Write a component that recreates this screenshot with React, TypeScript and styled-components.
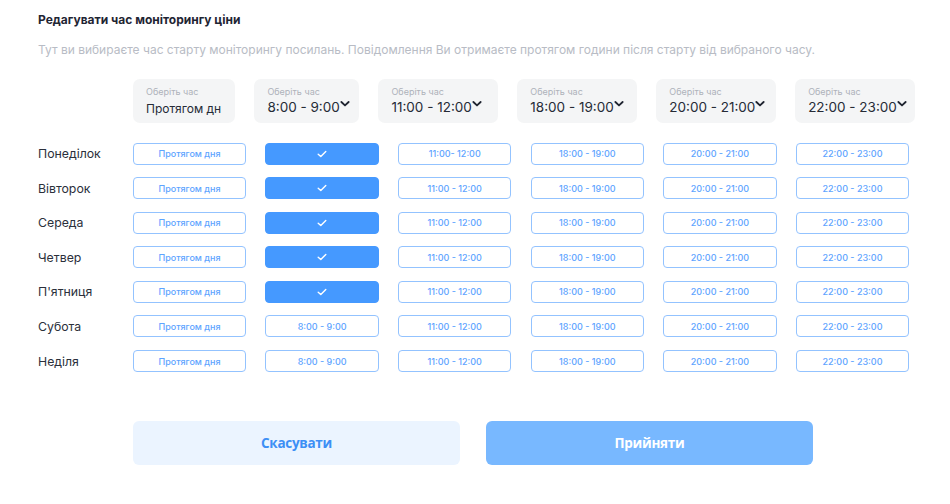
import React from 'react'
import styled, { createGlobalStyle } from 'styled-components'

const GlobalStyle = createGlobalStyle`
  body {
    margin: 0;
    background: #fff;
    font-family: Inter, "Noto Sans", sans-serif;
  }
`

const Page = styled.div`
  width: 950px;
  height: 504px;
  box-sizing: border-box;
  padding: 12px 0 0 38px;
  background: #fff;
`

const Title = styled.h2`
  margin: 0;
  font-size: 12px;
  line-height: 15px;
  font-weight: 700;
  color: #1f2533;
`

const Subtitle = styled.p`
  margin: 15px 0 0;
  font-size: 12px;
  line-height: 16px;
  color: #b8bcc5;
`

const HeaderRow = styled.div`
  display: flex;
  gap: 19.4px;
  margin: 21px 0 0 95px;
`

const SelectBox = styled.div<{ $w: number }>`
  width: ${(p) => p.$w}px;
  height: 44px;
  box-sizing: border-box;
  padding: 7px 0 0 13px;
  border-radius: 7px;
  background: #f4f5f6;
`

const SelectLabel = styled.div`
  font-size: 9px;
  line-height: 11px;
  color: #aeb2ba;
`

const SelectValue = styled.div<{ $small?: boolean }>`
  display: flex;
  align-items: flex-start;
  margin-top: ${(p) => (p.$small ? '3px' : '1px')};
  font-size: ${(p) => (p.$small ? '12px' : '13.5px')};
  line-height: 18px;
  color: #262b36;
  white-space: nowrap;

  & > svg {
    margin-top: 2px;
  }
`

const Grid = styled.div`
  display: grid;
  grid-template-columns: 75.6px repeat(6, 113.3px);
  column-gap: 19.3px;
  row-gap: 12.6px;
  margin-top: 19.5px;
`

const DayLabel = styled.div`
  display: flex;
  align-items: center;
  height: 22px;
  font-size: 12.3px;
  color: #2b303b;
`

const Slot = styled.div<{ $active?: boolean }>`
  display: flex;
  align-items: center;
  justify-content: center;
  height: 22px;
  box-sizing: border-box;
  border-radius: 4px;
  border: 1.5px solid ${(p) => (p.$active ? '#4599ff' : '#93c3ff')};
  background: ${(p) => (p.$active ? '#4599ff' : '#fff')};
  color: #5ea4ff;
  font-size: 9px;
  font-weight: 500;
`

const Footer = styled.div`
  display: flex;
  gap: 26px;
  margin: 49px 0 0 95px;
`

const FooterButton = styled.button<{ $primary?: boolean }>`
  width: 327px;
  height: 44px;
  border: none;
  border-radius: 6px;
  background: ${(p) => (p.$primary ? '#78b8ff' : '#ebf4ff')};
  color: ${(p) => (p.$primary ? '#fff' : '#3d8ff5')};
  font-family: "Open Sans", sans-serif;
  font-size: 13.5px;
  font-weight: 700;
  letter-spacing: -0.3px;
`

const Chevron = () => (
  <svg width="10" height="8" viewBox="0 0 11 8">
    <path d="M1.5 1.8 L5.5 5.6 L9.5 1.8" fill="none" stroke="#1f2430" strokeWidth="2" strokeLinecap="round" strokeLinejoin="round" />
  </svg>
)

const Check = () => (
  <svg width="10" height="8" viewBox="0 0 10 8">
    <path d="M1.2 4.2 L3.8 6.6 L8.8 1.4" fill="none" stroke="#fff" strokeWidth="1.4" strokeLinecap="round" strokeLinejoin="round" />
  </svg>
)

const headers = [
  { value: 'Протягом дн', w: 102, small: true },
  { value: '8:00 - 9:00', w: 104.7 },
  { value: '11:00 - 12:00', w: 119.5 },
  { value: '18:00 - 19:00', w: 119.5 },
  { value: '20:00 - 21:00', w: 119.5 },
  { value: '22:00 - 23:00', w: 120.3 },
]

const days = ['Понеділок', 'Вівторок', 'Середа', 'Четвер', "П'ятниця", 'Субота', 'Неділя']

const App = () => {
  return (
    <Page>
      <GlobalStyle />
      <Title>Редагувати час моніторингу ціни</Title>
      <Subtitle>
        Тут ви вибираєте час старту моніторингу посилань. Повідомлення Ви отримаєте протягом години після старту від вибраного часу.
      </Subtitle>

      <HeaderRow>
        {headers.map((h) => (
          <SelectBox key={h.value} $w={h.w}>
            <SelectLabel>Оберіть час</SelectLabel>
            <SelectValue $small={h.small}>
              {h.value}
              {!h.small && <Chevron />}
            </SelectValue>
          </SelectBox>
        ))}
      </HeaderRow>

      <Grid>
        {days.map((day, i) => (
          <React.Fragment key={day}>
            <DayLabel>{day}</DayLabel>
            <Slot>Протягом дня</Slot>
            {i < 5 ? (
              <Slot $active>
                <Check />
              </Slot>
            ) : (
              <Slot>8:00 - 9:00</Slot>
            )}
            <Slot>{i === 0 ? '11:00- 12:00' : '11:00 - 12:00'}</Slot>
            <Slot>18:00 - 19:00</Slot>
            <Slot>20:00 - 21:00</Slot>
            <Slot>22:00 - 23:00</Slot>
          </React.Fragment>
        ))}
      </Grid>

      <Footer>
        <FooterButton>Скасувати</FooterButton>
        <FooterButton $primary>Прийняти</FooterButton>
      </Footer>
    </Page>
  )
}

export default App
